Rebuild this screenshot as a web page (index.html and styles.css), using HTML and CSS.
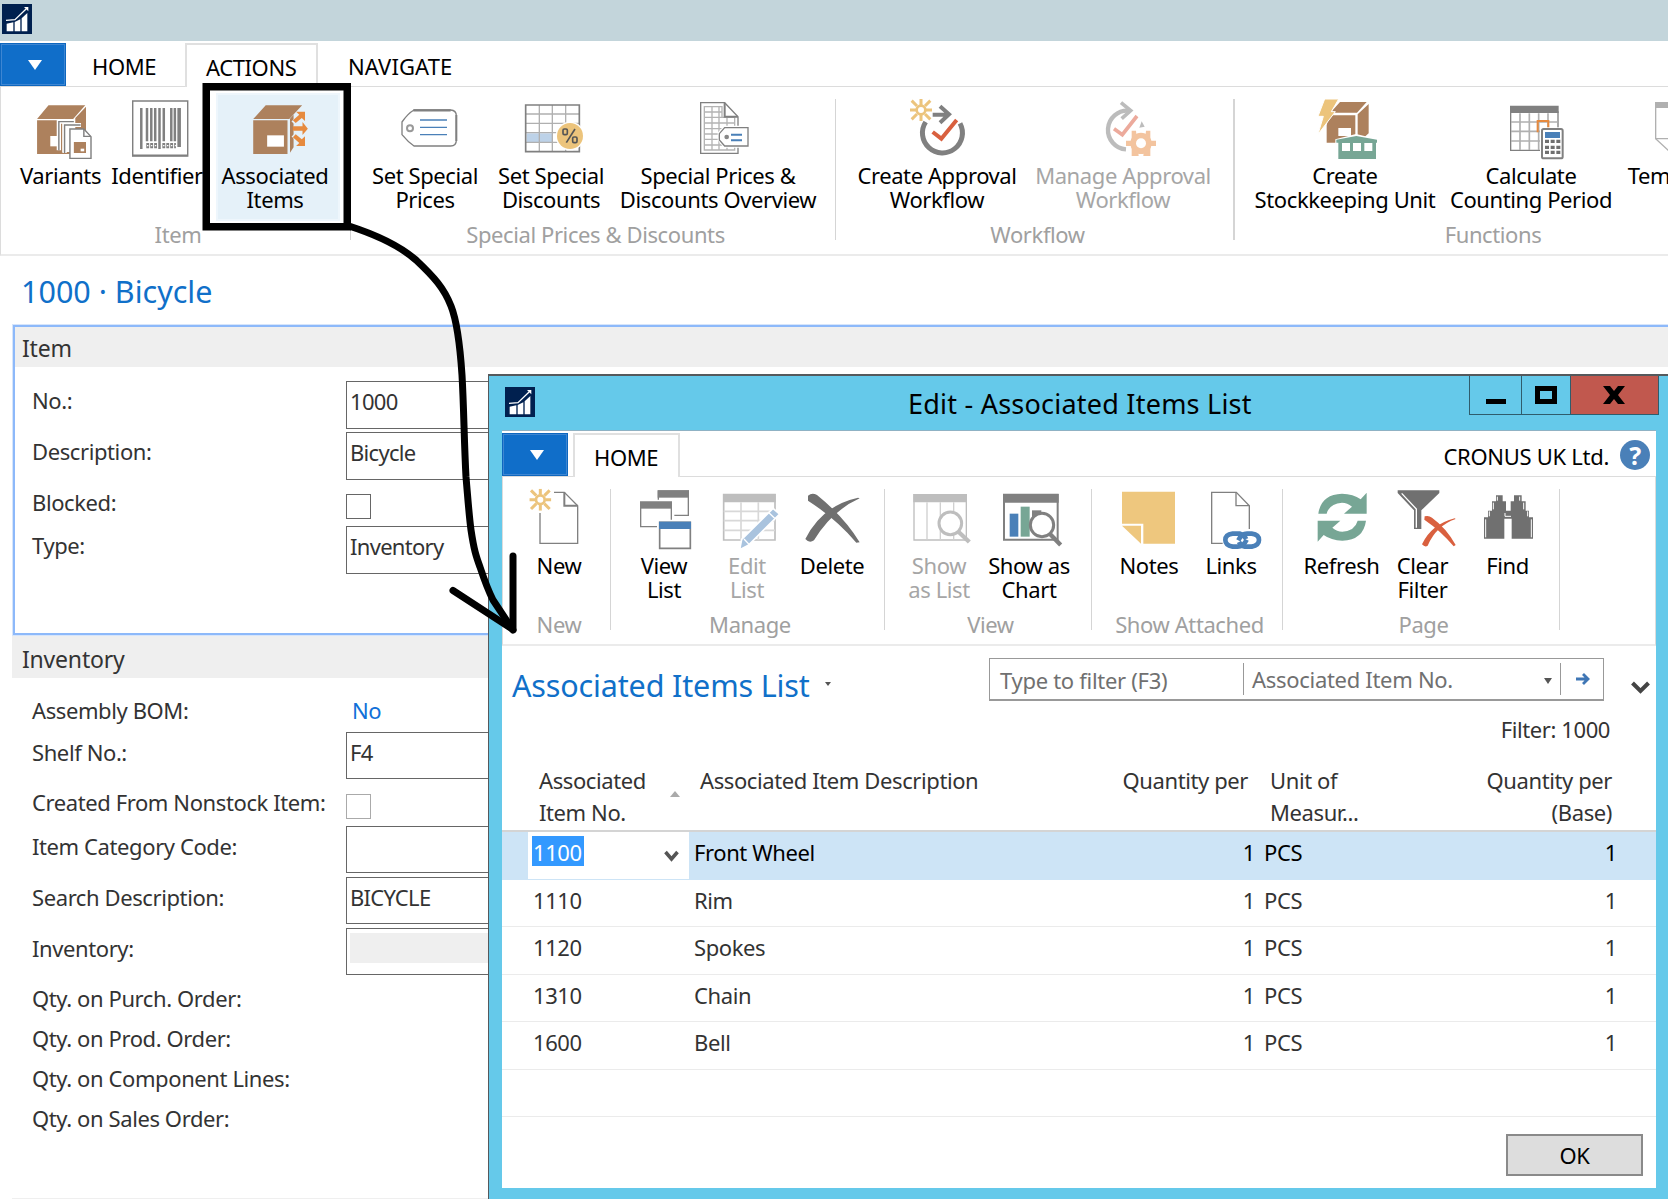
FILE: index.html
```html
<!DOCTYPE html>
<html lang="en">
<head>
<meta charset="utf-8">
<title>Item Card - 1000 · Bicycle</title>
<link rel="stylesheet" href="styles.css">
</head>
<body>
<svg width="0" height="0" class="defs">
  <symbol id="logo" viewBox="0 0 90 90">
    <rect width="90" height="90" fill="#00204f"/>
    <path d="M14 59l20-4v27H14zM38 54l17-8v36H38zM59 43l17-16v55H59z" fill="#fff"/>
    <path d="M12 49l27-2 34-33" fill="none" stroke="#fff" stroke-width="4"/>
    <path d="M66 9h13v13z" fill="#fff"/>
  </symbol>
  <symbol id="spark" viewBox="0 0 66 66">
    <path d="M33 0v18M33 48v18M0 33h18M48 33h18M5 5l16 16M61 5L45 21M5 61l16-16M61 61L45 45" stroke="#ecc47c" stroke-width="9" fill="none"/>
    <circle cx="33" cy="33" r="13" fill="#fff" stroke="#ecc47c" stroke-width="8"/>
  </symbol>
</svg>

<div class="titlebar"><svg class="logo"><use href="#logo"/></svg></div>

<div class="tabs">
  <div class="app-menu"></div>
  <div class="tab home">HOME</div>
  <div class="tab active">ACTIONS</div>
  <div class="tab navigate">NAVIGATE</div>
</div>

<div class="ribbon">
  <div class="group g-item">
    <div class="items">
      <div class="item w85">
        <svg viewBox="84 291 168 198" preserveAspectRatio="none">
          <path d="M101 357l32-41h103l-34 41zM101 361h101v101H101zM208 354l30-34v86h-30z" fill="#ad815d"/>
          <path d="M138 408h22v31h-22z" fill="#fff"/>
          <path d="M158 363h48v93h-34v-92z" fill="#fff"/>
          <path d="M162 451v-86h44M178 459v-84h46" fill="none" stroke="#fff" stroke-width="12"/>
          <path d="M162 451v-86h42M178 459v-84h45" fill="none" stroke="#808080" stroke-width="4"/>
          <path d="M193 387h39l20 23v65h-59z" fill="#fff" stroke="#808080" stroke-width="4"/>
          <path d="M232 387v22h20" fill="none" stroke="#808080" stroke-width="4"/>
          <path d="M204 426h34v33h-34z" fill="#ad815d"/><path d="M223 446h10v8h-10z" fill="#fff"/>
        </svg>
        <span>Variants</span>
      </div>
      <div class="item w118">
        <svg viewBox="370 291 168 198" preserveAspectRatio="none">
          <path d="M372 303h154v165H372z" fill="#fff" stroke="#808080" stroke-width="4"/>
          <path d="M370 466h156" stroke="#808080" stroke-width="5"/>
          <path d="M396 324v123M412 324v100M424 324v100M435 324v100M447 324v123M459 324v100M480 324v100M490 324v100" stroke="#808080" stroke-width="7"/>
          <path d="M502 324v117" stroke="#808080" stroke-width="10"/>
          <path d="M410 437h31M455 437h38" stroke="#808080" stroke-width="16" stroke-dasharray="8 3"/>
          <path d="M408 437h34M453 437h40" stroke="#fff" stroke-width="4" stroke-dasharray="4 7" stroke-dashoffset="-4"/>
        </svg>
        <span>Identifiers</span>
      </div>
      <div class="item w108 hot">
        <svg viewBox="686 291 168 198" preserveAspectRatio="none">
          <path d="M709 357l35-41h102l-36 41zM709 361h96v101h-96zM812 356l10-12v98l-10 16z" fill="#ad815d"/>
          <path d="M748 406h47v34h-47z" fill="#fff"/>
          <g fill="none" stroke="#e5f1f9" stroke-width="16"><path d="M822 370l26-28M822 385h34M822 404l26 26"/></g>
          <g fill="#e68a3e"><path d="M829 335h25v28l-9-9-17 15-8-8 18-17zM820 379h27v-13l15 20-15 19v-13h-27zM829 438h25v-29l-9 9-17-15-8 9 18 17z"/></g>
        </svg>
        <span>Associated<br>Items</span>
      </div>
    </div>
    <div class="caption">Item</div>
  </div>
  <div class="group g-prices">
    <div class="items">
      <div class="item w126">
        <svg viewBox="105 51 180 198">
          <path d="M162 90h110q17 1 17 17v74q0 17-17 17H162q-18-12-36-34v-38q18-26 36-36z" fill="#fff" stroke="#808080" stroke-width="4"/>
          <path d="M160 91h112" stroke="#808080" stroke-width="7"/><path d="M289 105v78" stroke="#808080" stroke-width="6"/>
          <circle cx="150" cy="145" r="9" fill="none" stroke="#999" stroke-width="6"/>
          <path d="M180 120h81M180 142h81M180 164h81" stroke="#4a80b8" stroke-width="4"/>
        </svg>
        <span>Set Special<br>Prices</span>
      </div>
      <div class="item w126">
        <svg viewBox="483 51 180 198">
          <path d="M498 75h159v140H498z" fill="#fff"/><path d="M500 160h78v26h-78z" fill="#bdd2e8"/>
          <path d="M538 75v140M577 75v140M617 75v140M498 102h159M498 130h159M498 158h159M498 187h159" stroke="#b0b0b0" stroke-width="4"/>
          <path d="M497 75h161v140H497z" fill="none" stroke="#808080" stroke-width="5"/>
          <circle cx="630" cy="168" r="43" fill="#fff"/><circle cx="630" cy="168" r="39" fill="#ecc47c"/>
          <path d="M645 147l-26 41" stroke="#555" stroke-width="5"/><rect x="609" y="147" width="13" height="17" rx="4" fill="none" stroke="#555" stroke-width="5"/><rect x="638" y="171" width="13" height="17" rx="4" fill="none" stroke="#555" stroke-width="5"/>
        </svg>
        <span>Set Special<br>Discounts</span>
      </div>
      <div class="item w208">
        <svg viewBox="984 51 180 198">
          <path d="M1022 68h72l40 42v110h-112z" fill="#fff" stroke="#808080" stroke-width="4"/>
          <path d="M1033 80h53v32h38v98h-91zM1033 96h53M1033 112h91M1033 129h91M1033 146h91M1033 162h91M1033 178h91M1033 195h91M1056 80v130M1077 80v130M1101 112v98" fill="none" stroke="#b4b4b4" stroke-width="4"/>
          <path d="M1094 68v42h40" fill="none" stroke="#808080" stroke-width="6"/>
          <path d="M1094 142h70v56h-70l-16-19v-19z" fill="#fff" stroke="#fff" stroke-width="10"/>
          <path d="M1094 143h70v55h-70l-16-18v-19z" fill="#fff" stroke="#808080" stroke-width="4"/>
          <circle cx="1100" cy="171" r="7" fill="#888"/>
          <path d="M1113 164h33M1113 181h33" stroke="#4a80b8" stroke-width="6"/>
        </svg>
        <span>Special Prices &amp;<br>Discounts Overview</span>
      </div>
    </div>
    <div class="caption">Special Prices &amp; Discounts</div>
  </div>
  <div class="group g-workflow">
    <div class="items">
      <div class="item w186">
        <svg viewBox="201 51 180 198">
          <use href="#spark" x="210" y="57" width="66" height="66"/>
          <path d="M257 126A60 60 0 1 0 360 130" fill="none" stroke="#808080" stroke-width="15"/>
          <path d="M278 104h46M300 79l27 24-27 25" fill="none" stroke="#808080" stroke-width="12"/>
          <path d="M278 156l26 20 46-56" fill="none" stroke="#d9603f" stroke-width="12"/>
        </svg>
        <span>Create Approval<br>Workflow</span>
      </div>
      <div class="item w186 off">
        <svg viewBox="759 51 180 198">
          <path d="M858 208A58 58 0 1 1 866 92" fill="none" stroke="#bcbcbc" stroke-width="13"/>
          <path d="M843 68l29 24-27 24" fill="none" stroke="#bcbcbc" stroke-width="11"/>
          <path d="M905 124l9 16-16 3z" fill="#bcbcbc"/>
          <path d="M822 146l25 18 44-56" fill="none" stroke="#ecaa9c" stroke-width="11"/>
          <g transform="translate(903 190)" fill="#f3c49f"><circle r="32"/><path d="M-45-8h90V8h-90zM-28-38h13l8 76h-21zM28-38H15l-8 76h21z"/><circle r="15" fill="#fff"/></g>
        </svg>
        <span>Manage Approval<br>Workflow</span>
      </div>
    </div>
    <div class="caption">Workflow</div>
  </div>
  <div class="group g-functions">
    <div class="items">
      <div class="item w186">
        <svg viewBox="255 51 180 198">
          <path d="M330 66h80l-29 32h-80zM298 106h78v82h-86v-52zM383 103l33-31v88l-33 30z" fill="#ad815d"/>
          <path d="M325 144h38v24h-38z" fill="#fff"/>
          <path d="M284 57h42l-22 38h12l-52 68 16-54h-16z" fill="#ecc47c" stroke="#fff" stroke-width="3"/>
          <path d="M316 178l62-16 66 16v16h-4v44H323v-44h-7z" fill="#fff"/>
          <path d="M319 179l60-11 62 11v9h-3v49H325v-49h-6z" fill="#77a695"/>
          <path d="M336 189h24v24h-24zM369 189h24v24h-24zM403 189h24v24h-24z" fill="#fff"/>
        </svg>
        <span>Create<br>Stockkeeping Unit</span>
      </div>
      <div class="item w186">
        <svg viewBox="813 51 180 198">
          <path d="M842 96h142v115H842z" fill="#fff" stroke="#808080" stroke-width="4"/>
          <path d="M840 77h146v22H840z" fill="#808080"/>
          <path d="M870 100v110M898 100v110M926 100v110M954 100v110M843 126h140M843 154h140M843 183h140" stroke="#b0b0b0" stroke-width="5"/>
          <path d="M923 157v-34h32v20" fill="none" stroke="#e68a3e" stroke-width="6"/>
          <rect x="930" y="142" width="73" height="98" fill="#fff"/>
          <rect x="936" y="147" width="62" height="88" rx="5" fill="#fff" stroke="#808080" stroke-width="6"/>
          <path d="M945 156h45v18h-45z" fill="#4a80b8"/>
          <path d="M945 184h46M945 202h46M945 217h46" stroke="#707070" stroke-width="10" stroke-dasharray="12 5"/>
        </svg>
        <span>Calculate<br>Counting Period</span>
      </div>
      <div class="item w110">
        <svg viewBox="1257 51 180 198">
          <path d="M1277 68h110v150h-65l-45-42z" fill="#fff" stroke="#b0b0b0" stroke-width="4"/><path d="M1277 176h45v42" fill="none" stroke="#b0b0b0" stroke-width="4"/>
          <path d="M1275 66h115v18h-115z" fill="#b0b0b0"/>
        </svg>
        <span>Templates</span>
      </div>
    </div>
    <div class="caption">Functions</div>
  </div>
</div>

<h1 class="page-title">1000 · Bicycle</h1>

<section class="fasttab focused">
  <h2>Item</h2>
  <div class="row r51"><label>No.:</label><div class="input">1000</div></div>
  <div class="row r62"><label>Description:</label><div class="input">Bicycle</div></div>
  <div class="row r32"><label>Blocked:</label><div class="check"></div></div>
  <div class="row"><label>Type:</label><div class="input">Inventory</div></div>
</section>

<section class="fasttab">
  <h2>Inventory</h2>
  <div class="row r34"><label>Assembly BOM:</label><a class="link">No</a></div>
  <div class="row r62 low"><label>Shelf No.:</label><div class="input">F4</div></div>
  <div class="row r32"><label>Created From Nonstock Item:</label><div class="check dim"></div></div>
  <div class="row r51"><label>Item Category Code:</label><div class="input"></div></div>
  <div class="row r51"><label>Search Description:</label><div class="input">BICYCLE</div></div>
  <div class="row r50"><label>Inventory:</label><div class="input"><i class="readonly"></i></div></div>
  <div class="row r40"><label>Qty. on Purch. Order:</label></div>
  <div class="row r40"><label>Qty. on Prod. Order:</label></div>
  <div class="row r40"><label>Qty. on Component Lines:</label></div>
  <div class="row r40"><label>Qty. on Sales Order:</label></div>
</section>
<section class="fasttab next"><h2></h2></section>

<div class="dialog">
  <div class="caption-bar">
    <svg class="logo"><use href="#logo"/></svg>
    <div class="dialog-title">Edit - Associated Items List</div>
    <div class="win-buttons">
      <div class="min"><svg width="20" height="5"><path d="M0 0h20v5H0z"/></svg></div>
      <div class="max"><svg width="22" height="18"><path d="M2.5 2.5h17v13h-17z" fill="none" stroke="#000" stroke-width="5"/></svg></div>
      <div class="close"><svg width="22" height="18" viewBox="0 0 22 18"><path d="M0 0h7l4 5 4-5h7l-7 9 7 9h-7l-4-5-4 5H0l7-9z"/></svg></div>
    </div>
  </div>
  <div class="client">
    <div class="tabs">
      <div class="app-menu"></div>
      <div class="tab active">HOME</div>
      <div class="company">CRONUS UK Ltd.</div>
      <div class="help">?</div>
    </div>
    <div class="ribbon">
      <div class="group d-new">
        <div class="items">
          <div class="item w104">
            <svg viewBox="145 352 180 198">
              <path d="M178 430v91h113V408l-40-40h-31" fill="none" stroke="#808080" stroke-width="4"/><path d="M251 368v40h40" fill="none" stroke="#808080" stroke-width="6"/>
              <use href="#spark" x="146" y="357" width="66" height="66"/>
            </svg>
            <span>New</span>
          </div>
        </div>
        <div class="caption">New</div>
      </div>
      <div class="group d-manage">
        <div class="items">
          <div class="item w84">
            <svg viewBox="465 352 180 198">
              <path d="M538 364h90v73h-90z" fill="#fff" stroke="#808080" stroke-width="4"/><path d="M536 362h94v22h-94z" fill="#808080"/>
              <path d="M478 390h108v86H478z" fill="#fff"/><path d="M485 398h92v73h-92z" fill="#fff" stroke="#808080" stroke-width="4"/><path d="M483 395h96v22h-96z" fill="#808080"/>
              <path d="M534 450h108v92H534z" fill="#fff"/><path d="M542 458h92v78h-92z" fill="#fff" stroke="#808080" stroke-width="5"/><path d="M540 456h96v22h-96z" fill="#4a80b8"/>
            </svg>
            <span>View<br>List</span>
          </div>
          <div class="item w82 off">
            <svg viewBox="712 352 180 198">
              <path d="M732 375h154v136H732z" fill="#fff" stroke="#bebebe" stroke-width="5"/><path d="M730 373h158v25H730z" fill="#bebebe"/>
              <path d="M784 398v113M836 398v113M732 425h154M732 453h154M732 482h154" stroke="#d8d8d8" stroke-width="5"/>
              <path d="M780 540l6-31 94-93 20 17-94 94z" fill="#a9c3de" stroke="#fff" stroke-width="5"/><path d="M866 428l19 18M793 508l16 17" stroke="#fff" stroke-width="4"/>
            </svg>
            <span>Edit<br>List</span>
          </div>
          <div class="item w88">
            <svg viewBox="967 352 180 198">
              <path d="M985 378q12-10 27-2 82 66 128 142l-10 1Q1070 448 985 393z" fill="#707070"/>
              <path d="M1140 386q-84 38-137 126-14 10-26-4 50-100 158-124z" fill="#707070"/>
            </svg>
            <span>Delete</span>
          </div>
        </div>
        <div class="caption">Manage</div>
      </div>
      <div class="group d-view">
        <div class="items">
          <div class="item w90 off">
            <svg viewBox="147 352 180 198">
              <path d="M162 375h157v136H162z" fill="#fff" stroke="#bebebe" stroke-width="4"/><path d="M160 373h161v25H160z" fill="#bebebe"/>
              <path d="M201 398v113M241 398v113M281 398v113" stroke="#d0d0d0" stroke-width="4"/>
              <circle cx="271" cy="461" r="34" fill="#fff" stroke="#bebebe" stroke-width="9"/><path d="M296 487l32 30" stroke="#bebebe" stroke-width="13"/>
            </svg>
            <span>Show<br>as List</span>
          </div>
          <div class="item w90">
            <svg viewBox="417 352 180 198">
              <path d="M432 375h161v135H432z" fill="#fff" stroke="#808080" stroke-width="6"/><path d="M429 373h167v26H429z" fill="#808080"/>
              <path d="M449 432h26v69h-26z" fill="#4a80b8"/><path d="M482 411h27v90h-27z" fill="#77a695"/><path d="M516 422h28v30h-28z" fill="#808080"/>
              <circle cx="546" cy="466" r="35" fill="#fff" stroke="#808080" stroke-width="9"/><path d="M570 493l32 33" stroke="#808080" stroke-width="13"/>
            </svg>
            <span>Show as<br>Chart</span>
          </div>
        </div>
        <div class="caption">View</div>
      </div>
      <div class="group d-attached">
        <div class="items">
          <div class="item w82">
            <svg viewBox="777 352 180 198">
              <path d="M786 366h159v156h-95v-60h-64z" fill="#eec77e"/><path d="M786 468h57v54z" fill="#eec77e"/>
            </svg>
            <span>Notes</span>
          </div>
          <div class="item w82">
            <svg viewBox="1023 352 180 198">
              <path d="M1088 521h-33V368h74l39 40v70" fill="none" stroke="#808080" stroke-width="4"/><path d="M1128 368v40h40" fill="none" stroke="#808080" stroke-width="4"/>
              <g fill="none" stroke="#4a80b8" stroke-width="14"><path d="M1160 510q-10 21-27 21h-15q-22-4-22-20t22-19h22q14 4 18 16"/><path d="M1135 512q10-20 26-20h14q22 3 22 19t-22 20h-20q-13-3-18-14"/></g>
            </svg>
            <span>Links</span>
          </div>
        </div>
        <div class="caption">Show Attached</div>
      </div>
      <div class="group d-page">
        <div class="items">
          <div class="item w81">
            <svg viewBox="214 352 180 198">
              <g fill="#77a695"><path d="M233 432q8-58 71-60 34 1 56 17l18-20v63h-68l24-21q-14-12-30-12-38 3-46 33z"/><path d="M233 432q8-58 71-60 34 1 56 17l18-20v63h-68l24-21q-14-12-30-12-38 3-46 33z" transform="rotate(180 304.500 442.500)"/></g>
            </svg>
            <span>Refresh</span>
          </div>
          <div class="item w81">
            <svg viewBox="457 352 180 198">
              <path d="M471 362h125v8l-54 52v56h-22v-56l-49-52z" fill="#707070"/><path d="M483 371l44 47v56" fill="none" stroke="#fff" stroke-width="4"/>
              <path d="M552 440q12-4 22 4 44 32 71 82l-6 4q-38-46-88-80z" fill="#d9603f"/><path d="M645 448q-58 20-84 80-8 6-17-4 28-60 98-78z" fill="#d9603f"/>
            </svg>
            <span>Clear<br>Filter</span>
          </div>
          <div class="item w89">
            <svg viewBox="712 352 180 198">
              <path d="M766 377h20v18h10v28h14v-28h10v-18h23v18h12v28h10v20h12v64h-64v-60h-22v60h-61v-64h12v-20h12v-28h12z" fill="#707070"/>
              <path d="M735 503v-54M746 440v-15M758 419v-20M770 393v-12M872 503v-54M861 440v-15M849 419v-20M837 393v-12M793 430v10h18" fill="none" stroke="#fff" stroke-width="3"/>
            </svg>
            <span>Find</span>
          </div>
        </div>
        <div class="caption">Page</div>
      </div>
    </div>
    <div class="list-head">
      <h1>Associated Items List</h1><i class="mark"></i>
      <div class="filter">
        <div class="f-text">Type to filter (F3)</div>
        <div class="f-field">Associated Item No.<i class="tri"></i></div>
        <div class="f-go"><svg width="15" height="12" viewBox="0 0 15 12"><path d="M0 6h12M7 1l5 5-5 5" fill="none" stroke="#3f76b5" stroke-width="2.800"/></svg></div>
      </div>
      <svg class="chev" width="19" height="13" viewBox="0 0 19 13"><path d="M1.500 2l8 8 8-8" fill="none" stroke="#444" stroke-width="4"/></svg>
    </div>
    <div class="filter-info">Filter: 1000</div>
    <div class="grid">
      <div class="grow ghead"><div></div><div>Associated<br>Item No.<i class="sort"></i></div><div>Associated Item Description</div><div class="num">Quantity per</div><div class="unit">Unit of<br>Measur...</div><div class="num">Quantity per<br>(Base)</div></div>
      <div class="grow sel"><div></div><div class="edit"><mark>1100</mark><svg width="15" height="13" viewBox="0 0 15 13"><path d="M1.500 2l6 7 6-7" fill="none" stroke="#555" stroke-width="3.500"/></svg></div><div>Front Wheel</div><div class="num">1</div><div class="unit">PCS</div><div class="num">1</div></div>
      <div class="grow"><div></div><div>1110</div><div>Rim</div><div class="num">1</div><div class="unit">PCS</div><div class="num">1</div></div>
      <div class="grow"><div></div><div>1120</div><div>Spokes</div><div class="num">1</div><div class="unit">PCS</div><div class="num">1</div></div>
      <div class="grow"><div></div><div>1310</div><div>Chain</div><div class="num">1</div><div class="unit">PCS</div><div class="num">1</div></div>
      <div class="grow"><div></div><div>1600</div><div>Bell</div><div class="num">1</div><div class="unit">PCS</div><div class="num">1</div></div>
      <div class="grow"></div>
    </div>
    <div class="footer"><div class="ok">OK</div></div>
  </div>
</div>

<svg class="annotation" width="1668" height="1199" fill="none" stroke="#000">
  <rect x="206.250" y="86.750" width="141" height="140" stroke-width="7.500"/>
  <g stroke-width="7" stroke-linecap="round" stroke-linejoin="round">
    <path d="M349 226C380 236 400 246 416 260C434 277 444 288 451 306C457 321 460 345 462 375C464 410 464 440 466 477C468 500 469 515 471 530C474 550 476 556 480 567C484 579 488 590 493 600L513 630"/>
    <path d="M513 556V629.500L453 590.500"/>
  </g>
</svg>
</body>
</html>
```
FILE: styles.css
```css
* { box-sizing: border-box; }
body {
  margin: 0; width: 1668px; height: 1199px; overflow: hidden; position: relative;
  background: #fff; color: #333;
  font: 22px/24px "Noto Sans", sans-serif; letter-spacing: -0.4px;
  white-space: nowrap;
}
h1, h2 { margin: 0; font-weight: normal; }
.defs { position: absolute; }
.logo { display: block; width: 30px; height: 30px; }

.titlebar { height: 41px; padding: 4px 2px; background: #c3d5db; }

/* Ribbon tabs */
.tabs { display: flex; height: 45px; padding-top: 2px; color: #000; line-height: 45px; }
.app-menu {
  width: 66px; height: 43px; background: #106ec9;
  border: 1px solid #0e67bf; box-shadow: inset 0 0 0 1px #3e86d2;
  display: flex; justify-content: center; padding: 16px 0 0 3px;
}
.app-menu::before { content: ""; width: 0; height: 0; border: 7px solid transparent; border-top: 10px solid #fff; border-bottom: 0; }
.tab { padding-top: 1px; height: 44px; }
.tab.home { width: 119px; padding-left: 26px; }
.tab.active { position: relative; z-index: 1; background: #fff; border: 2px solid #e0e0e0; border-bottom: 0; width: 133px; padding: 0 0 0 19px; line-height: 44px; }
.tab.navigate { padding-left: 30px; letter-spacing: 0.1px; }

/* Ribbon body */
.ribbon { display: flex; height: 170px; border: 1px solid #dcdcdc; border-width: 1px 0 2px 1px; border-bottom-color: #ebebeb; overflow: hidden; color: #000; }
.group { position: relative; flex: none; }
.group::after { content: ""; position: absolute; right: 0; top: 12px; height: 141px; width: 1px; background: #d5d5d5; }
.items { display: flex; height: 124px; padding-top: 10px; }
.item { flex: none; position: relative; display: flex; flex-direction: column; align-items: center; text-align: center; }
.item svg { width: 60px; height: 66px; overflow: visible; flex: none; position: relative; }
.item span { position: relative; }
.item.off { color: #a6a6a6; }
.item.hot::before { content: ""; position: absolute; left: -5px; right: -11px; top: -4px; height: 124px; background: #e5f1f9; border: 2px solid #eef6fc; box-shadow: 0 0 0 7px #fff; }
.caption { text-align: center; color: #a0a0a0; margin-top: 11px; padding-left: 4px; }
.w81 { width: 81px; } .w82 { width: 82px; } .w84 { width: 84px; } .w85 { width: 85px; }
.w88 { width: 88px; } .w89 { width: 89px; } .w90 { width: 90px; } .w104 { width: 104px; }
.w108 { width: 108px; } .w110 { width: 110px; } .w118 { width: 118px; } .w126 { width: 126px; }
.w186 { width: 186px; } .w208 { width: 208px; }
.g-item { width: 350px; } .g-item .items { padding-left: 17px; }
.g-prices { width: 485px; } .g-prices .items { padding-left: 11px; }
.g-workflow { width: 399px; } .g-workflow .items { padding-left: 8px; }
.g-workflow::after { width: 2px; }
.g-functions { width: 512px; } .g-functions .items { padding-left: 17px; }

/* Card page */
.page-title { height: 69px; padding: 11px 0 0 21px; font-size: 30.5px; line-height: 48px; color: #1070c9; letter-spacing: 0; }
.fasttab { margin-left: 12px; width: 1700px; }
.fasttab h2 { height: 42px; padding-left: 10px; background: #efefef; font-size: 23px; line-height: 47px; letter-spacing: -0.2px; }
.fasttab.focused { height: 310px; width: 1699px; margin: 0 0 1px 13px; border: 2px solid #8db9fa; box-shadow: 0 0 0 1px #d6e5fb; }
.fasttab.focused h2 { height: 40px; padding-left: 7px; line-height: 43px; margin-bottom: 14px; }
.row { display: flex; line-height: 40px; height: 51px; }
.row label { width: 314px; margin-left: 20px; }
.focused .row { line-height: 39px; }
.focused .row label { margin-left: 17px; }
.r62 { height: 62px; } .r32, .focused .r32 { height: 32px; line-height: 16px; } .r50 { height: 50px; }
.r34 { height: 34px; line-height: 25px; } .r40 { height: 40px; line-height: 40px; }
.fasttab:not(.focused) .r34 { margin-top: 20px; }
.input { width: 400px; height: 48px; padding-left: 3px; border: 1px solid #666; line-height: 38px; letter-spacing: -0.7px; }
.low .input, .low ~ .row .input { height: 47px; }
.check { width: 25px; height: 25px; border: 1px solid #666; }
.check.dim { border-color: #aaa; }
.link { color: #1070d8; padding-left: 6px; }
.readonly { display: block; height: 30px; margin-top: 4px; background: #efefef; }
.next { margin-top: 60px; }

/* Dialog window over the card */
.dialog {
  position: absolute; left: 488px; top: 374px; width: 1200px; height: 840px;
  background: #65c9ea; border: 2px solid #55595c; border-width: 2px 0 0 1px; padding-left: 13px;
}
.caption-bar { display: flex; height: 54px; width: 1157px; }
.caption-bar .logo { margin: 11px 0 0 3px; }
.dialog-title { margin-left: 373px; width: 561px; color: #000; font-size: 27px; line-height: 55px; letter-spacing: 0.23px; }
.win-buttons { display: flex; width: 190px; height: 39px; flex: none; }
.win-buttons > div { border: 1px solid #2f5c6c; border-top: 0; display: flex; align-items: center; justify-content: center; }
.min { width: 53px; padding-top: 12px; }
.max { width: 49px; border-left: 0 !important; }
.close { width: 88px; padding-right: 2px; background: #c1584e; border-left: 0 !important; }
.client { width: 1154px; height: 758px; background: #fff; border-top: 1px solid #8fb2c4; }
.client .tabs { height: 45px; padding-top: 2px; }
.client .tab.active { width: 107px; margin-left: 5px; line-height: 45px; }
.company { margin-left: auto; letter-spacing: -0.3px; line-height: 46px; }
.help { width: 30px; height: 30px; margin: 7px 6px 0 11px; border-radius: 50%; background: #4a80b8; color: #fff; text-align: center; font-weight: bold; font-size: 25px; line-height: 31px; }
.client .ribbon { border-right: 1px solid #dcdcdc; height: 170px; }
.d-new { width: 108px; } .d-new .items { padding-left: 4px; }
.d-manage { width: 274px; } .d-manage .items { padding-left: 11px; }
.d-view { width: 207px; } .d-view .items { padding-left: 9px; }
.d-attached { width: 191px; } .d-attached .items { padding-left: 16px; }
.d-page { width: 277px; } .d-page .items { padding-left: 18px; }

.list-head { display: flex; height: 67px; padding: 12px 0 0 10px; }
.list-head h1 { font-size: 30.5px; line-height: 54px; color: #1070c9; letter-spacing: -0.15px; width: 313px; }
.mark { margin-top: 24px; border: 3.500px solid transparent; border-top: 4px solid #555; border-bottom: 0; height: 0; }
.filter { display: flex; margin-left: 158px; width: 615px; height: 43px; border: 1.500px solid #999; border-bottom-width: 2px; padding: 4px 0; color: #707070; line-height: 35px; }
.f-text { width: 254px; padding-left: 10px; border-right: 1px solid #999; letter-spacing: -0.3px; }
.f-field { width: 317px; padding-left: 8px; border-right: 1px solid #999; display: flex; letter-spacing: -0.3px; line-height: 33px; }
.tri { margin: 15px 8px 0 auto; border: 4.500px solid transparent; border-top: 6px solid #555; border-bottom: 0; height: 0; }
.f-go { padding: 10px 0 0 15px; line-height: 0; }
.chev { margin: 23px 0 0 27px; }
.filter-info { height: 59px; padding: 4px 46px 0 0; text-align: right; line-height: 24px; }

.grow { display: grid; grid-template-columns: 26px 161px 386px 180px 150px 212px; height: 47.500px; border-bottom: 1.500px solid #ebebeb; line-height: 40px; }
.grow > :nth-child(2), .grow > :nth-child(3) { padding-left: 5px; }
.num { text-align: right; }
.unit { padding-left: 9px; }
.ghead { height: 60px; line-height: 31.500px; border-bottom: 2px solid #d4d4d4; }
.ghead > div { position: relative; top: -7px; }
.ghead > :nth-child(2) { padding-left: 11px; }
.ghead > :nth-child(3) { padding-left: 11px; }
.ghead .num { padding-right: 7px; }
.ghead .num:last-child { padding-right: 5px; }
.ghead .unit { padding-left: 15px; }
.sort { position: absolute; right: 9px; top: 26px; border: 5.500px solid transparent; border-bottom: 6px solid #aaa; border-top: 0; }
.sel { background: #cde4f6; border-color: #cde4f6; color: #000; }
.edit { background: #fff; display: flex; height: 47px; padding-left: 4px !important; padding-top: 4px; }
.edit mark { background: #39f; color: #fff; width: 52px; height: 30px; line-height: 32px; padding-left: 1px; }
.edit svg { margin: 14px 10px 0 auto; }
.footer { padding: 17px 13px 0; display: flex; justify-content: flex-end; }
.ok { width: 137px; height: 42px; background: #ddd; border: 2px solid #8a8a8a; color: #000; text-align: center; line-height: 39px; }

.annotation { position: absolute; left: 0; top: 0; z-index: 10; }
```
